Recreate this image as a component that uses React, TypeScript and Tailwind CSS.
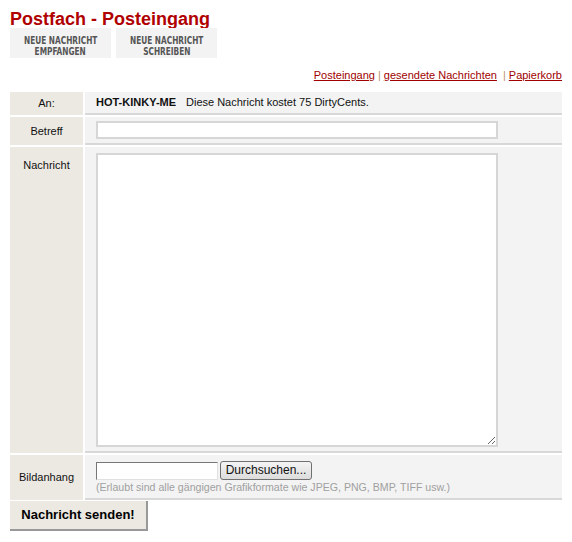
import { ReactNode } from 'react';

const base = { fontFamily: '"Liberation Sans", Arial, sans-serif' };
const cond = { fontFamily: '"DejaVu Sans Condensed", "DejaVu Sans", sans-serif', fontStretch: 'condensed' as const };

function NavButton({ top, bottom }: { top: string; bottom: string }) {
  return (
    <div
      className="flex h-[30px] w-[101px] flex-col items-center justify-center bg-[#f3f3f3] pt-[5px] text-[10px] font-bold leading-[11px] text-[#555]"
      style={cond}
    >
      <span className="inline-block scale-x-[0.82] whitespace-nowrap">{top}</span>
      <span className="inline-block scale-x-[0.82] whitespace-nowrap">{bottom}</span>
    </div>
  );
}

function Label({ children, className = '' }: { children: ReactNode; className?: string }) {
  return (
    <div className={`flex justify-center bg-[#ece9e2] text-[11px] text-[#111] ${className}`}>
      {children}
    </div>
  );
}

function Value({ children, className = '' }: { children: ReactNode; className?: string }) {
  return (
    <div className={`border-b-2 border-[#d8d8d8] bg-[#f3f3f3] pl-[11px] ${className}`}>
      {children}
    </div>
  );
}

export default function App() {
  return (
    <div className="min-h-[542px] w-[572px] bg-white px-[10px] pt-[9px]" style={base}>
      <h1 className="text-[18px] font-bold leading-[20px] text-[#b00000]">Postfach - Posteingang</h1>

      <div className="mt-[-1px] flex gap-[5px]">
        <NavButton top="NEUE NACHRICHT" bottom="EMPFANGEN" />
        <NavButton top="NEUE NACHRICHT" bottom="SCHREIBEN" />
      </div>

      <div className="mt-[11px] flex justify-end text-[11px] leading-[13px] text-[#c09070]">
        <a className="text-[#a00000] underline">Posteingang</a>
        <span className="mx-[3px]">|</span>
        <a className="text-[#a00000] underline">gesendete Nachrichten</a>
        <span className="ml-[6px] mr-[3px]">|</span>
        <a className="text-[#a00000] underline">Papierkorb</a>
      </div>

      <div className="mt-[10px] grid grid-cols-[73px_1fr] gap-[2px]">
        <Label className="h-[23px] items-center">An:</Label>
        <Value className="flex h-[23px] items-center text-[11px] text-[#111]">
          <span className="w-[90px] font-bold">HOT-KINKY-ME</span>
          <span>Diese Nachricht kostet 75 DirtyCents.</span>
        </Value>

        <Label className="h-[28px] items-center">Betreff</Label>
        <Value className="flex h-[28px] items-center">
          <input className="h-[18px] w-[402px] border-2 border-[#d6d6d6] bg-white outline-none" />
        </Value>

        <Label className="h-[306px] items-start pt-[10px]">Nachricht</Label>
        <Value className="h-[306px] pt-[6px]">
          <textarea className="h-[294px] w-[402px] resize border-2 border-[#d6d6d6] bg-white outline-none" />
        </Value>

        <Label className="h-[45px] items-center">Bildanhang</Label>
        <Value className="h-[45px] pt-[6px]">
          <div className="flex items-center gap-[2px]">
            <div className="h-[18px] w-[122px] border border-b-[#e0e0e0] border-l-[#777] border-r-[#e0e0e0] border-t-[#777] bg-white" />
            <button
              className="h-[19px] w-[92px] rounded-[3px] border border-[#707070] bg-gradient-to-b from-[#f4f4f4] to-[#dcdcdc] text-[12px] leading-[15px] text-[#111]"
              style={base}
            >
              Durchsuchen...
            </button>
          </div>
          <div className="mt-[1px] text-[10.6px] leading-[13px] text-[#a0a0a0]">
            (Erlaubt sind alle gängigen Grafikformate wie JPEG, PNG, BMP, TIFF usw.)
          </div>
        </Value>
      </div>

      <button
        className="mt-[1px] h-[30px] w-[138px] border-b-2 border-r-2 border-b-[#999] border-r-[#999] bg-[#ece9e2] text-[13px] font-bold text-black"
        style={base}
      >
        Nachricht senden!
      </button>
    </div>
  );
}
